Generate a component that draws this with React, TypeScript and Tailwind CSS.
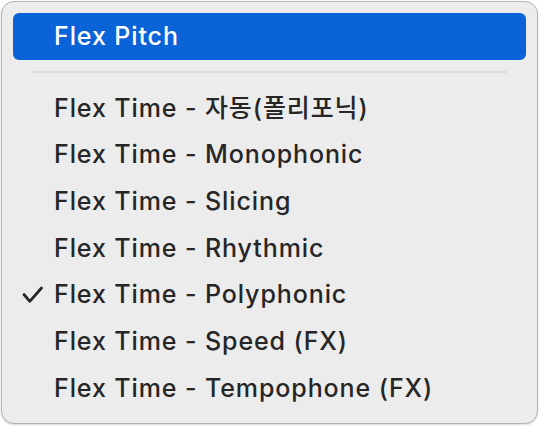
const items = [
  { label: 'Flex Time - 자동(폴리포닉)' },
  { label: 'Flex Time - Monophonic' },
  { label: 'Flex Time - Slicing' },
  { label: 'Flex Time - Rhythmic' },
  { label: 'Flex Time - Polyphonic', checked: true },
  { label: 'Flex Time - Speed (FX)' },
  { label: 'Flex Time - Tempophone (FX)' },
];

function CheckMark() {
  return (
    <svg
      className="absolute left-[8px] top-1/2 -translate-y-1/2"
      width="24"
      height="20"
      viewBox="0 0 24 20"
      fill="none"
      stroke="#262626"
      strokeWidth="2.8"
      strokeLinecap="round"
      strokeLinejoin="round"
    >
      <path d="M3 9.5 L8.8 16.3 L20.5 3" />
    </svg>
  );
}

export default function App() {
  return (
    <div
      className="w-[540px] h-[426px] bg-white p-[1px]"
      style={{ fontFamily: 'Inter, "Noto Sans CJK KR", sans-serif' }}
    >
      <div className="w-[537px] h-[423px] rounded-[13px] border border-[#b4b4b4] bg-[#ececec] px-[11px] pt-[11px] shadow-[0_1px_2px_rgba(0,0,0,0.15)]">
        <div className="h-[47px] rounded-[6px] bg-[#0b63d8] pl-[41px] flex items-center text-[25px] tracking-[0.9px] text-white font-medium">
          Flex Pitch
        </div>
        <div className="h-[25px] flex items-center px-[19px] pb-[1px]">
          <div className="h-[2px] w-full bg-[#dcdcdc]" />
        </div>
        <ul>
          {items.map((it) => (
            <li
              key={it.label}
              className="relative h-[46.67px] pl-[41px] flex items-center text-[25px] tracking-[0.9px] text-[#262626] font-medium"
            >
              {it.checked && <CheckMark />}
              {it.label}
            </li>
          ))}
        </ul>
      </div>
    </div>
  );
}
